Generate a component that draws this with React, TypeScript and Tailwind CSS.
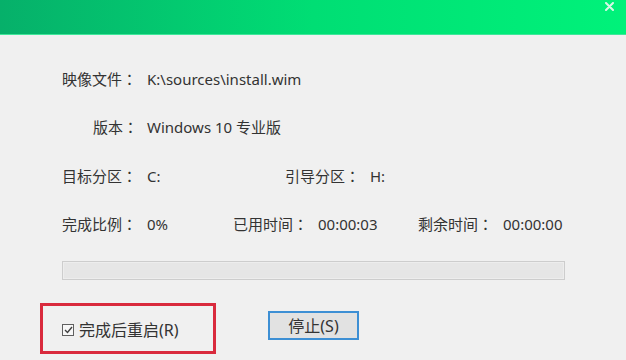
import React from "react"

const font = { fontFamily: '"Noto Sans", "Noto Sans CJK SC", sans-serif' }
const colonFont = { fontFamily: '"Noto Sans CJK TC", sans-serif' }

function Field({ label, value, width, right }: { label: string; value: string; width?: string; right?: boolean }) {
  return (
    <div className={`flex items-center ${width ?? ""}`}>
      <span className={`w-[76px] shrink-0 whitespace-nowrap ${right ? "text-right" : ""}`}>
        {label}
        <span style={colonFont}>：</span>
      </span>
      <span className="ml-[9px] whitespace-nowrap">{value}</span>
    </div>
  )
}

export default function App() {
  return (
    <div className="w-[626px] h-[360px] bg-[#f0f0f0] overflow-hidden text-[15px] text-[#333333]" style={font}>
      <header className="relative h-[35px] bg-gradient-to-r from-[#06b06a] via-[#00de74] to-[#00f27a] border-b border-[#3fe79a]">
        <svg className="absolute right-[12px] top-[2px]" width="9" height="9" viewBox="0 0 9 9">
          <path d="M1 1 L8 8 M8 1 L1 8" stroke="#d8f7e6" strokeWidth="2" strokeLinecap="round" />
        </svg>
      </header>

      <main className="pl-[62px] pt-[20px]">
        <div className="h-[48px] flex items-center">
          <Field label="映像文件" value="K:\sources\install.wim" />
        </div>
        <div className="h-[48px] flex items-center">
          <Field label="版本" value="Windows 10 专业版" right />
        </div>
        <div className="h-[50px] flex items-center">
          <Field label="目标分区" value="C:" width="w-[223px]" />
          <Field label="引导分区" value="H:" />
        </div>
        <div className="h-[46px] flex items-center">
          <Field label="完成比例" value="0%" width="w-[171px]" />
          <Field label="已用时间" value="00:00:03" width="w-[185px]" />
          <Field label="剩余时间" value="00:00:00" />
        </div>

        <div className="mt-[14px] w-[503px] h-[19px] border border-[#cdcdcd] bg-[#e6e6e6] shadow-[inset_0_0_0_1px_#ededed]" />
      </main>

      <div className="flex items-start mt-[23px] ml-[40px]">
        <div className="w-[176px] h-[51px] border-[3px] border-[#d92a3d] flex items-center pl-[19px] pt-[2px]">
          <div className="w-[12px] h-[12px] border border-[#606060] bg-[#f7f7f7] flex items-center justify-center">
            <svg width="9" height="8" viewBox="0 0 9 8">
              <path d="M1 4 L3.5 6.5 L8 1" fill="none" stroke="#404040" strokeWidth="1.4" />
            </svg>
          </div>
          <span className="ml-[5px] whitespace-nowrap text-[16px]">完成后重启(R)</span>
        </div>
        <button className="ml-[52px] mt-[8px] w-[91px] h-[29px] border-2 border-[#3d8fd4] bg-[#e2e2e2] flex items-center justify-center text-[16px] text-[#333333]">
          停止(S)
        </button>
      </div>
    </div>
  )
}
